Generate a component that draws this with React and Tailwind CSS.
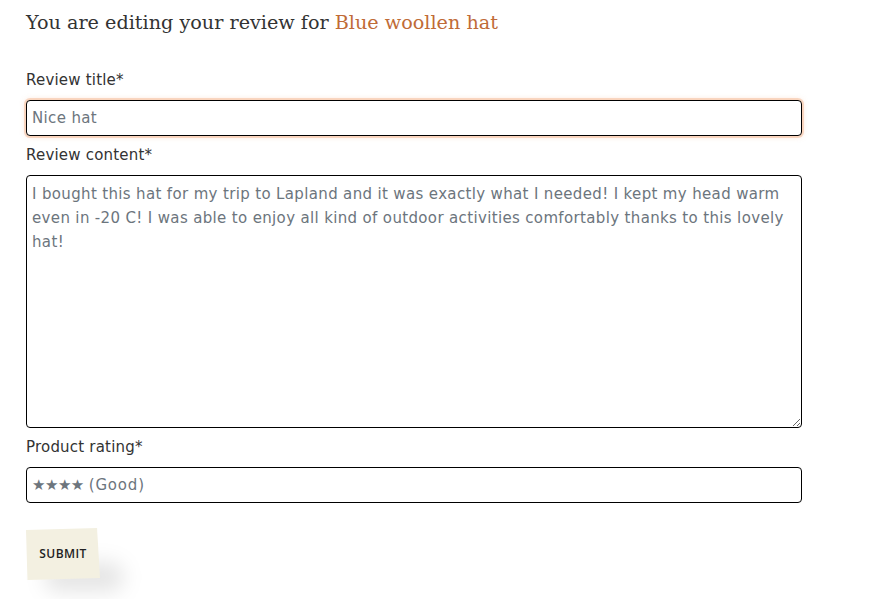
import React from 'react'

const labelCls = 'block text-[15px] leading-[22px] tracking-[0.2px] text-[#333333] mb-[9px]'
const fieldCls =
  'block w-[776px] border border-black rounded-[4px] bg-white text-[15px] tracking-[0.35px] text-[#6c757d] px-[5px] outline-none'

const App = () => {
  return (
    <div className="min-h-[599px] bg-white pl-[26px] pt-[9px] font-['DejaVu_Sans',sans-serif]">
      <h1 className="font-['DejaVu_Serif',serif] text-[19.2px] leading-[28px] text-[#333333] mb-[32px]">
        You are editing your review for <span className="text-[#c06b37]">Blue woollen hat</span>
      </h1>

      <form onSubmit={e => e.preventDefault()}>
        <label className={labelCls}>Review title*</label>
        <input
          className={`${fieldCls} h-[36px] shadow-[0_0_0_2px_rgba(240,160,110,0.35),0_0_6px_rgba(240,150,100,0.35)] mb-[8px]`}
          defaultValue="Nice hat"
        />

        <label className={labelCls}>Review content*</label>
        <textarea
          className={`${fieldCls} h-[253px] pt-[6px] pb-[4px] pr-[14px] leading-[24px] resize-y mb-[8px]`}
          defaultValue="I bought this hat for my trip to Lapland and it was exactly what I needed! I kept my head warm even in -20 C! I was able to enjoy all kind of outdoor activities comfortably thanks to this lovely hat!"
        />

        <label className={labelCls}>Product rating*</label>
        <div className={`${fieldCls} h-[36px] flex items-center`}>
          <span className="text-[15px] tracking-[-0.5px] mr-[5px]">★★★★</span>
          <span className="tracking-[0.8px]">(Good)</span>
        </div>

        <div className="relative mt-[25px] w-[74px] h-[52px]">
          <div className="absolute left-[18px] top-[34px] w-[80px] h-[30px] rounded-full bg-black/10 blur-[10px]" />
          <button
            type="submit"
            className="relative w-[74px] h-[52px] bg-[#f3f0e1] font-['Open_Sans',sans-serif] text-[12px] font-semibold text-[#222222] tracking-[0.4px] [clip-path:polygon(0_4%,96%_0,100%_96%,2%_100%)]"
          >
            SUBMIT
          </button>
        </div>
      </form>
    </div>
  )
}

export default App
